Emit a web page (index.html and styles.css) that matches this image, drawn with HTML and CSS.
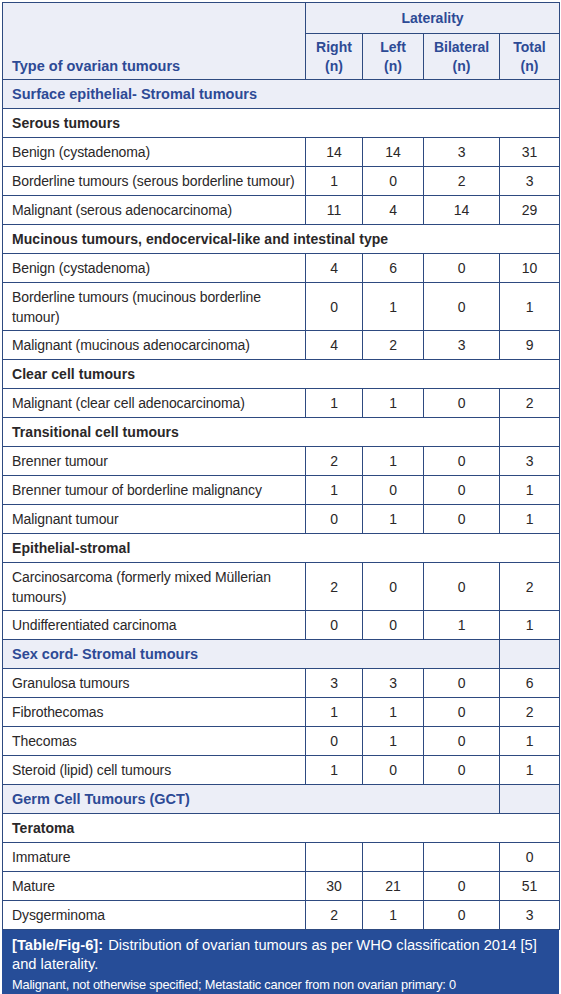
FILE: index.html
```html
<!DOCTYPE html>
<html>
<head>
<meta charset="utf-8">
<link rel="stylesheet" href="styles.css">
</head>
<body>
<div class="wrap">
<table class="tbl">
  <colgroup>
    <col class="c-name"><col class="c-r"><col class="c-l"><col class="c-b"><col class="c-t">
  </colgroup>
  <thead>
    <tr class="h1">
      <th rowspan="2" class="th-name">Type of ovarian tumours</th>
      <th colspan="4" class="th-lat">Laterality</th>
    </tr>
    <tr class="h2">
      <th>Right<br>(n)</th>
      <th>Left<br>(n)</th>
      <th>Bilateral<br>(n)</th>
      <th>Total<br>(n)</th>
    </tr>
  </thead>
  <tbody>
    <tr class="grp"><td colspan="5">Surface epithelial- Stromal tumours</td></tr>
    <tr class="sub"><td colspan="5">Serous tumours</td></tr>
    <tr><td>Benign (cystadenoma)</td><td>14</td><td>14</td><td>3</td><td>31</td></tr>
    <tr><td>Borderline tumours (serous borderline tumour)</td><td>1</td><td>0</td><td>2</td><td>3</td></tr>
    <tr><td>Malignant (serous adenocarcinoma)</td><td>11</td><td>4</td><td>14</td><td>29</td></tr>
    <tr class="sub"><td colspan="5">Mucinous tumours, endocervical-like and intestinal type</td></tr>
    <tr><td>Benign (cystadenoma)</td><td>4</td><td>6</td><td>0</td><td>10</td></tr>
    <tr class="two"><td>Borderline tumours (mucinous borderline tumour)</td><td>0</td><td>1</td><td>0</td><td>1</td></tr>
    <tr><td>Malignant (mucinous adenocarcinoma)</td><td>4</td><td>2</td><td>3</td><td>9</td></tr>
    <tr class="sub"><td colspan="5">Clear cell tumours</td></tr>
    <tr><td>Malignant (clear cell adenocarcinoma)</td><td>1</td><td>1</td><td>0</td><td>2</td></tr>
    <tr class="sub"><td colspan="4">Transitional cell tumours</td><td></td></tr>
    <tr><td>Brenner tumour</td><td>2</td><td>1</td><td>0</td><td>3</td></tr>
    <tr><td>Brenner tumour of borderline malignancy</td><td>1</td><td>0</td><td>0</td><td>1</td></tr>
    <tr><td>Malignant tumour</td><td>0</td><td>1</td><td>0</td><td>1</td></tr>
    <tr class="sub"><td colspan="5">Epithelial-stromal</td></tr>
    <tr class="two"><td>Carcinosarcoma (formerly mixed Müllerian tumours)</td><td>2</td><td>0</td><td>0</td><td>2</td></tr>
    <tr><td>Undifferentiated carcinoma</td><td>0</td><td>0</td><td>1</td><td>1</td></tr>
    <tr class="grp"><td colspan="4">Sex cord- Stromal tumours</td><td></td></tr>
    <tr><td>Granulosa tumours</td><td>3</td><td>3</td><td>0</td><td>6</td></tr>
    <tr><td>Fibrothecomas</td><td>1</td><td>1</td><td>0</td><td>2</td></tr>
    <tr><td>Thecomas</td><td>0</td><td>1</td><td>0</td><td>1</td></tr>
    <tr><td>Steroid (lipid) cell tumours</td><td>1</td><td>0</td><td>0</td><td>1</td></tr>
    <tr class="grp"><td colspan="4">Germ Cell Tumours (GCT)</td><td></td></tr>
    <tr class="sub"><td colspan="5">Teratoma</td></tr>
    <tr><td>Immature</td><td></td><td></td><td></td><td>0</td></tr>
    <tr><td>Mature</td><td>30</td><td>21</td><td>0</td><td>51</td></tr>
    <tr><td>Dysgerminoma</td><td>2</td><td>1</td><td>0</td><td>3</td></tr>
  </tbody>
</table>
<div class="caption">
  <p class="cap-main"><b class="cap-label">[Table/Fig-6]:</b> Distribution of ovarian tumours as per WHO classification 2014 [5] and laterality.</p>
  <p class="cap-note">Malignant, not otherwise specified; Metastatic cancer from non ovarian primary: 0</p>
</div>
</div>
</body>
</html>
```

FILE: styles.css
```css
html, body {
  margin: 0;
  padding: 0;
  background: #ffffff;
}

.wrap {
  padding: 2px 2px 0 2px;
  width: 557px;
  font-family: "Liberation Sans", Arial, sans-serif;
  color: #2a2728;
}

.tbl {
  width: 557px;
  border-collapse: collapse;
  table-layout: fixed;
  font-size: 14px;
  letter-spacing: -0.1px;
}

.c-name { width: 303px; }
.c-r { width: 57px; }
.c-l { width: 61px; }
.c-b { width: 76px; }
.c-t { width: 60px; }

.tbl th,
.tbl td {
  border: 1px solid #2e4a80;
  padding: 0 9px;
  height: 28px;
  line-height: 18px;
  text-align: center;
  vertical-align: middle;
}

.tbl td:first-child {
  text-align: left;
}

.tbl thead th {
  background: #eceef7;
  color: #2d4a95;
  font-weight: bold;
  letter-spacing: 0;
}

.tbl .h1 th { height: 30px; }
.tbl .h2 th { height: 45px; padding: 0 2px; line-height: 19px; }

.tbl .th-name {
  text-align: left;
  vertical-align: bottom;
  padding: 0 9px 4px 9px;
  font-size: 14.5px;
}

.tbl .grp td {
  background: #eceef7;
  color: #2d4a95;
  font-weight: bold;
  font-size: 14.5px;
  letter-spacing: 0;
}

.tbl .sub td {
  font-weight: bold;
  letter-spacing: 0.05px;
}

.tbl .two td {
  height: 47px;
  line-height: 20px;
}

.caption {
  background: #264d98;
  color: #ffffff;
  padding: 6px 10px 4px 10px;
}

.cap-main {
  margin: 0;
  font-size: 14.7px;
  line-height: 19px;
}

.cap-label {
  letter-spacing: 0;
  margin-right: 1px;
}

.cap-note {
  margin: 2px 0 0 0;
  font-size: 12.8px;
  line-height: 17px;
  letter-spacing: -0.2px;
}
```
